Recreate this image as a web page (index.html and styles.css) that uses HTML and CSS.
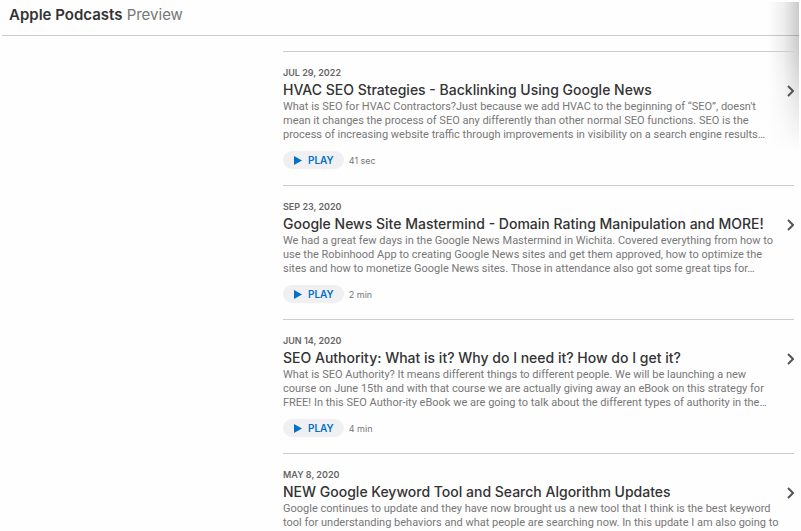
FILE: index.html
```html
<!DOCTYPE html>
<html lang="en">
<head>
    <meta charset="UTF-8">
    <meta name="viewport" content="width=device-width, initial-scale=1.0">
    <title>Apple Podcasts Preview</title>
    <link rel="stylesheet" href="styles.css">
</head>
<body>
    <header class="header">
        <a class="brand" href="#"><strong>Apple Podcasts</strong> Preview</a>
    </header>
    <div class="edge-shadow"></div>
    <main class="episodes">
        <article class="episode">
            <div class="date">JUL 29, 2022</div>
            <h2><a href="#">HVAC SEO Strategies - Backlinking Using Google News</a></h2>
            <p>What is SEO for HVAC Contractors?Just because we add HVAC to the beginning of “SEO”, doesn't mean it changes the process of SEO any differently than other normal SEO functions. SEO is the process of increasing website traffic through improvements in visibility on a search engine results…</p>
            <div class="controls">
                <button class="play" type="button"><svg width="8" height="9" viewBox="0 0 8 9"><path d="M0 0L8 4.5L0 9Z"/></svg>PLAY</button>
                <span class="duration">41 sec</span>
            </div>
            <svg class="chevron" width="7" height="12" viewBox="0 0 7 12"><path d="M1 1L6 6L1 11"/></svg>
        </article>
        <article class="episode">
            <div class="date">SEP 23, 2020</div>
            <h2><a href="#">Google News Site Mastermind - Domain Rating Manipulation and MORE!</a></h2>
            <p>We had a great few days in the Google News Mastermind in Wichita. Covered everything from how to use the Robinhood App to creating Google News sites and get them approved, how to optimize the sites and how to monetize Google News sites. Those in attendance also got some great tips for…</p>
            <div class="controls">
                <button class="play" type="button"><svg width="8" height="9" viewBox="0 0 8 9"><path d="M0 0L8 4.5L0 9Z"/></svg>PLAY</button>
                <span class="duration">2 min</span>
            </div>
            <svg class="chevron" width="7" height="12" viewBox="0 0 7 12"><path d="M1 1L6 6L1 11"/></svg>
        </article>
        <article class="episode">
            <div class="date">JUN 14, 2020</div>
            <h2><a href="#">SEO Authority: What is it? Why do I need it? How do I get it?</a></h2>
            <p>What is SEO Authority? It means different things to different people. We will be launching a new course on June 15th and with that course we are actually giving away an eBook on this strategy for FREE! In this SEO Author-ity eBook we are going to talk about the different types of authority in the…</p>
            <div class="controls">
                <button class="play" type="button"><svg width="8" height="9" viewBox="0 0 8 9"><path d="M0 0L8 4.5L0 9Z"/></svg>PLAY</button>
                <span class="duration">4 min</span>
            </div>
            <svg class="chevron" width="7" height="12" viewBox="0 0 7 12"><path d="M1 1L6 6L1 11"/></svg>
        </article>
        <article class="episode">
            <div class="date">MAY 8, 2020</div>
            <h2><a href="#">NEW Google Keyword Tool and Search Algorithm Updates</a></h2>
            <p>Google continues to update and they have now brought us a new tool that I think is the best keyword tool for understanding behaviors and what people are searching now. In this update I am also going to</p>
            <svg class="chevron" width="7" height="12" viewBox="0 0 7 12"><path d="M1 1L6 6L1 11"/></svg>
        </article>
    </main>
</body>
</html>
```
FILE: styles.css
```css
:root {
    --background-color: #fefefe;
    --title-color: #333333;
    --text-color: #777777;
    --line-color: #cccccc;
    --link-color: #0070c9;
}
* {
    box-sizing: border-box;
}
body {
    position: relative;
    margin: 0;
    background: var(--background-color);
    color: var(--text-color);
    font-family: Inter, 'Liberation Sans', sans-serif;
}
a {
    color: inherit;
    text-decoration: none;
}
.header {
    height: 36px;
    margin: 0 2px;
    padding: 5px 7px;
    border-bottom: 1px solid var(--line-color);
    font-size: 15px;
    line-height: 20px;
}
.brand strong {
    color: var(--title-color);
    font-weight: 600;
}
.edge-shadow {
    position: absolute;
    top: 2px;
    right: 2px;
    width: 32px;
    height: 150px;
    background: linear-gradient(to right, transparent, rgba(0, 0, 0, 0.06) 50%, rgba(0, 0, 0, 0.2));
    -webkit-mask-image: linear-gradient(to bottom, #000 30%, transparent);
    mask-image: linear-gradient(to bottom, #000 30%, transparent);
}
.episodes {
    margin: 15px 7px 0 283px;
}
.episode {
    position: relative;
    padding: 15px 0 16px;
    border-top: 1px solid var(--line-color);
}
.episode:last-child {
    padding-bottom: 0;
}
.date {
    color: #666666;
    font-size: 9px;
    font-weight: 600;
    line-height: 12px;
}
h2 {
    margin: 2px 0 1px;
    color: var(--title-color);
    font-size: 14px;
    font-weight: 500;
    line-height: 18px;
}
p {
    margin: 0;
    padding-right: 13px;
    font-family: Roboto, sans-serif;
    font-size: 11px;
    line-height: 14px;
}
.controls {
    display: flex;
    align-items: center;
    gap: 5px;
    margin-top: 9px;
}
.play {
    display: flex;
    align-items: center;
    gap: 6px;
    height: 18px;
    padding: 0 10px 0 11px;
    border: none;
    border-radius: 9px;
    background: #f0f0f2;
    color: var(--link-color);
    font-family: inherit;
    font-size: 10px;
    font-weight: 600;
}
.play svg {
    fill: var(--link-color);
}
.duration {
    font-size: 9px;
}
.chevron {
    position: absolute;
    top: 33px;
    right: 0;
    fill: none;
    stroke: #555555;
    stroke-width: 2;
}
```
